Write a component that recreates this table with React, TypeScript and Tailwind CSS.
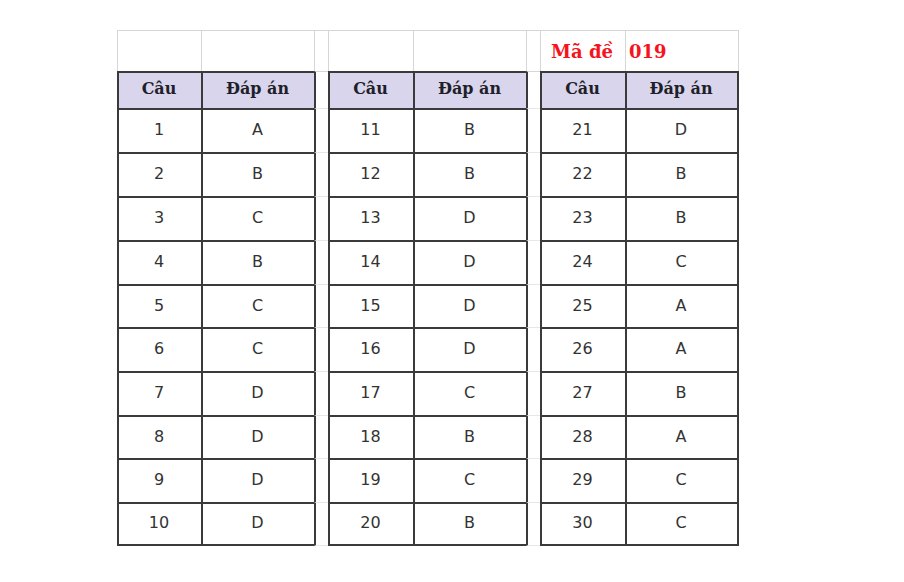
import React from "react";

const colW = [84, 113, 14, 85, 113, 14, 85, 114];
const isSpacer = (c: number) => c === 2 || c === 5;

const data: [number, string][][] = [
  [[1, "A"], [2, "B"], [3, "C"], [4, "B"], [5, "C"], [6, "C"], [7, "D"], [8, "D"], [9, "D"], [10, "D"]],
  [[11, "B"], [12, "B"], [13, "D"], [14, "D"], [15, "D"], [16, "D"], [17, "C"], [18, "B"], [19, "C"], [20, "B"]],
  [[21, "D"], [22, "B"], [23, "B"], [24, "C"], [25, "A"], [26, "A"], [27, "B"], [28, "A"], [29, "C"], [30, "C"]],
];

const rowH = [41, 37, 44, 44, 44, 44, 43, 44, 44, 43, 44, 44];

const DARK = "#3a3a3a";
const GRAY = "#d6d6d6";
const FAINT = "#e8e8e8";

export default function App() {
  const cells: React.ReactNode[] = [];
  const nRows = rowH.length;
  for (let r = 0; r < nRows; r++) {
    for (let c = 0; c < 8; c++) {
      const spacer = isSpacer(c);
      const inTable = r >= 1;
      const lastRow = r === nRows - 1;
      const lastCol = c === 7;
      let top = GRAY;
      let left = GRAY;
      let right = "transparent";
      let bottom = "transparent";
      let tw = 1;
      let lw = 1;
      let rw = lastCol ? 1 : 0;
      let bw = 0;
      if (inTable) {
        if (spacer) {
          top = r === 1 ? GRAY : FAINT;
          left = DARK;
          lw = 2;
          if (lastRow) {
            bottom = FAINT;
            bw = 1;
          }
        } else {
          top = DARK;
          left = DARK;
          tw = 2;
          lw = 2;
          if (lastRow) {
            bottom = DARK;
            bw = 2;
          }
        }
      }
      if (lastCol) {
        right = inTable ? DARK : GRAY;
        rw = inTable ? 2 : 1;
      }
      const bg = r === 1 && !spacer ? "#d8d5ec" : "#ffffff";
      let content: React.ReactNode = null;
      let cls = "flex items-center justify-center";
      if (r === 0) {
        if (c === 6) {
          content = "Mã đề";
          cls = "flex items-center justify-center pr-[2px] font-bold text-[18px] text-[#f5141e] [font-family:'DejaVu_Serif',serif]";
        } else if (c === 7) {
          content = "019";
          cls = "flex items-center justify-start pl-[3px] font-bold text-[18px] text-[#f5141e] [font-family:'DejaVu_Serif',serif]";
        }
      } else if (r === 1 && !spacer) {
        content = c % 3 === 0 ? "Câu" : "Đáp án";
        cls = "flex items-center justify-center pr-[2px] pb-[3px] font-bold text-[16px] text-[#1f1f2a] [font-family:'DejaVu_Serif',serif]";
      } else if (r >= 2 && !spacer) {
        const t = Math.floor(c / 3);
        const row = data[t][r - 2];
        content = c % 3 === 0 ? String(row[0]) : row[1];
        cls = "flex items-center justify-center pr-[2px] pb-[2px] text-[16px] text-[#333333] [font-family:'DejaVu_Sans',sans-serif]";
      }
      cells.push(
        <div
          key={`${r}-${c}`}
          className={`box-border border-solid ${cls}`}
          style={{
            width: colW[c],
            height: rowH[r],
            borderTopWidth: tw,
            borderLeftWidth: lw,
            borderRightWidth: rw,
            borderBottomWidth: bw,
            borderTopColor: top,
            borderLeftColor: left,
            borderRightColor: right,
            borderBottomColor: bottom,
            backgroundColor: bg,
          }}
        >
          {content}
        </div>
      );
    }
  }
  return (
    <div className="w-[904px] h-[582px] bg-white overflow-hidden">
      <div className="ml-[117px] mt-[30px] grid grid-cols-[84px_113px_14px_85px_113px_14px_85px_114px] w-[622px]">
        {cells}
      </div>
    </div>
  );
}
